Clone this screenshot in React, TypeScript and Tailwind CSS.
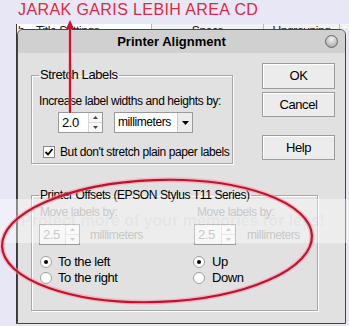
import type { ReactNode } from 'react';

const ui = "font-['Liberation_Sans',Arial,sans-serif] text-[12px] tracking-[-0.4px] whitespace-nowrap";

function Arrow({ down, disabled }: { down?: boolean; disabled?: boolean }) {
  return (
    <svg width="5" height="3" viewBox="0 0 5 3" className="block">
      <polygon points={down ? '0,0 5,0 2.5,3' : '0,3 5,3 2.5,0'} fill={disabled ? '#b0b0b0' : '#444'} />
    </svg>
  );
}

function SpinBox({ value, disabled, className }: { value: string; disabled?: boolean; className: string }) {
  return (
    <div className={`flex h-[21px] border border-[#9a9a9a] ${disabled ? 'bg-[#f3f3f3] text-[#a3a3a3]' : 'bg-white text-black'} ${className}`}>
      <span className="flex-1 pl-[3px] text-[13px] leading-[19px]">{value}</span>
      <div className="flex w-[14px] flex-col border-l border-[#d6d6d6]">
        <div className="flex flex-1 items-center justify-center border-b border-[#d6d6d6] bg-[#f7f7f7]">
          <Arrow disabled={disabled} />
        </div>
        <div className="flex flex-1 items-center justify-center bg-[#f7f7f7]">
          <Arrow down disabled={disabled} />
        </div>
      </div>
    </div>
  );
}

function Radio({ checked, label, gap }: { checked?: boolean; label: string; gap: string }) {
  return (
    <div className={`flex h-[16px] items-center ${gap}`}>
      <span className="flex h-[12px] w-[12px] items-center justify-center rounded-full border border-[#a0a0a0] bg-white">
        {checked && <span className="h-[4px] w-[4px] rounded-full bg-black" />}
      </span>
      <span className="text-[13px] leading-[16px]">{label}</span>
    </div>
  );
}

function Button({ children, className }: { children: ReactNode; className: string }) {
  return (
    <div className={`flex w-[73px] items-center justify-center border border-[#9c9c9c] bg-[#ececec] text-[13px] shadow-[inset_1px_1px_0_#fff] ${className}`}>
      {children}
    </div>
  );
}

export default function App() {
  return (
    <div className="relative h-[326px] w-[349px] overflow-hidden bg-[#e7e7f5]">
      {/* caption */}
      <div className="h-[24px] pl-[18px] font-['Liberation_Sans',sans-serif] text-[16px] leading-[20px] tracking-[0.4px] text-[#dd2a44]">
        JARAK GARIS LEBIH AREA CD
      </div>

      {/* window behind the dialog */}
      <div className="ml-[16px] border-l border-[#3a3a3a]">
        <div className={`flex h-[5px] overflow-hidden leading-[14px] text-[#222] ${ui}`}>
          <div className="w-[134px] bg-white pl-[1px]">b&nbsp;&nbsp;&nbsp;&nbsp;Title Settings</div>
          <div className="flex w-[112px] justify-center border-l border-[#bbb] bg-[#f2f2f2]">Specs</div>
          <div className="flex w-[76px] justify-center border-l border-[#bbb] bg-[#f2f2f2]">Ungrouping</div>
          <div className="flex-1 border-l border-[#bbb] bg-[#f2f2f2]" />
        </div>

        {/* dialog */}
        <div className={`flex h-[295px] w-[329px] flex-col overflow-hidden rounded-t-[6px] border border-[#444] bg-[#e1e1e1] text-black ${ui}`}>
          <div className="flex h-[23px] shrink-0 items-center bg-[#d0d0d0]">
            <div className="flex-1 text-center text-[13px] font-bold tracking-normal">Printer Alignment</div>
            <div className="mr-[7px] h-[13px] w-[13px] rounded-full border border-[#666] bg-[radial-gradient(circle_at_50%_30%,#f4f4f4,#9a9a9a)]" />
          </div>

          <div className="flex-1 px-[13px] pt-[10px]">
            <div className="flex items-start">
              <fieldset className="mt-[4px] h-[97px] w-[202px] min-w-0 shrink-0 border border-[#a6a6a6] px-[7px] pt-[10px] shadow-[1px_1px_0_#fff,inset_1px_1px_0_#fff]">
                <legend className="px-[1px] text-[13px] leading-[16px]">Stretch Labels</legend>
                <div className="leading-[16px]">Increase label widths and heights by:</div>
                <div className="mt-[3px] ml-[19px] flex gap-[11px]">
                  <SpinBox value="2.0" className="w-[45px]" />
                  <div className="flex h-[21px] w-[79px] border border-[#9a9a9a] bg-white">
                    <span className="flex-1 pl-[3px] leading-[19px]">millimeters</span>
                    <div className="flex w-[15px] items-center justify-center border-l border-[#c8c8c8] bg-[#ececec]">
                      <svg width="7" height="4" viewBox="0 0 7 4">
                        <polygon points="0,0 7,0 3.5,4" fill="#000" />
                      </svg>
                    </div>
                  </div>
                </div>
                <div className="mt-[11px] ml-[4px] flex h-[16px] items-center gap-[5px]">
                  <span className="flex h-[12px] w-[12px] items-center justify-center border border-[#8a8a8a] bg-white">
                    <svg width="10" height="10" viewBox="0 0 10 10">
                      <path d="M1.5 5 L4 7.5 L8.5 2" fill="none" stroke="#000" strokeWidth="1.8" />
                    </svg>
                  </span>
                  <span className="leading-[16px]">But don't stretch plain paper labels</span>
                </div>
              </fieldset>

              <div className="ml-[29px] flex flex-col">
                <Button className="h-[26px]">OK</Button>
                <Button className="mt-[3px] h-[25px]">Cancel</Button>
                <Button className="mt-[18px] h-[25px]">Help</Button>
              </div>
            </div>

            <fieldset className="mt-[23px] h-[124px] w-[287px] min-w-0 border border-[#a6a6a6] px-[7px] pt-[1px] shadow-[1px_1px_0_#fff,inset_1px_1px_0_#fff]">
              <legend className="px-[1px] leading-[16px]">Printer Offsets (EPSON Stylus T11 Series)</legend>
              <div className="grid grid-cols-[155px_1fr]">
                <div>
                  <div className="pl-[1px] leading-[16px] text-[#a3a3a3]">Move labels by:</div>
                  <div className="mt-[4px] flex items-center">
                    <SpinBox value="2.5" disabled className="w-[41px]" />
                    <span className="ml-[10px] text-[#a3a3a3]">millimeters</span>
                  </div>
                  <div className="mt-[9px] pl-[1px]">
                    <Radio checked label="To the left" gap="gap-[6px]" />
                    <Radio label="To the right" gap="gap-[6px]" />
                  </div>
                </div>
                <div>
                  <div className="pl-[3px] leading-[16px] text-[#a3a3a3]">Move labels by:</div>
                  <div className="mt-[4px] flex items-center">
                    <SpinBox value="2.5" disabled className="w-[42px]" />
                    <span className="ml-[11px] text-[#a3a3a3]">millimeters</span>
                  </div>
                  <div className="mt-[9px] -ml-[1px]">
                    <Radio checked label="Up" gap="gap-[7px]" />
                    <Radio label="Down" gap="gap-[7px]" />
                  </div>
                </div>
              </div>
            </fieldset>
          </div>
        </div>
      </div>

      {/* photo watermark band */}
      <div className="pointer-events-none absolute top-[199px] left-0 flex h-[44px] w-full items-center bg-white/40 pl-[21px] font-['Liberation_Sans',sans-serif] text-[16px] font-bold text-black/[0.05]">
        Protect more of your memories for less!
      </div>

      {/* red annotation */}
      <svg className="pointer-events-none absolute top-0 left-0" width="349" height="326" viewBox="0 0 349 326">
        <line x1="70" y1="26" x2="70" y2="113" stroke="#f39aa8" strokeWidth="4" opacity="0.5" />
        <line x1="70" y1="26" x2="70" y2="113" stroke="#d0102e" strokeWidth="2" />
        <polygon points="66,29 70,20 74,29" fill="#d0102e" />
        <ellipse cx="157" cy="241" rx="155" ry="61" transform="rotate(-2 157 241)" fill="none" stroke="#f39aa8" strokeWidth="5" opacity="0.55" />
        <ellipse cx="157" cy="241" rx="155" ry="61" transform="rotate(-2 157 241)" fill="none" stroke="#c4102e" strokeWidth="2.2" />
      </svg>
    </div>
  );
}
